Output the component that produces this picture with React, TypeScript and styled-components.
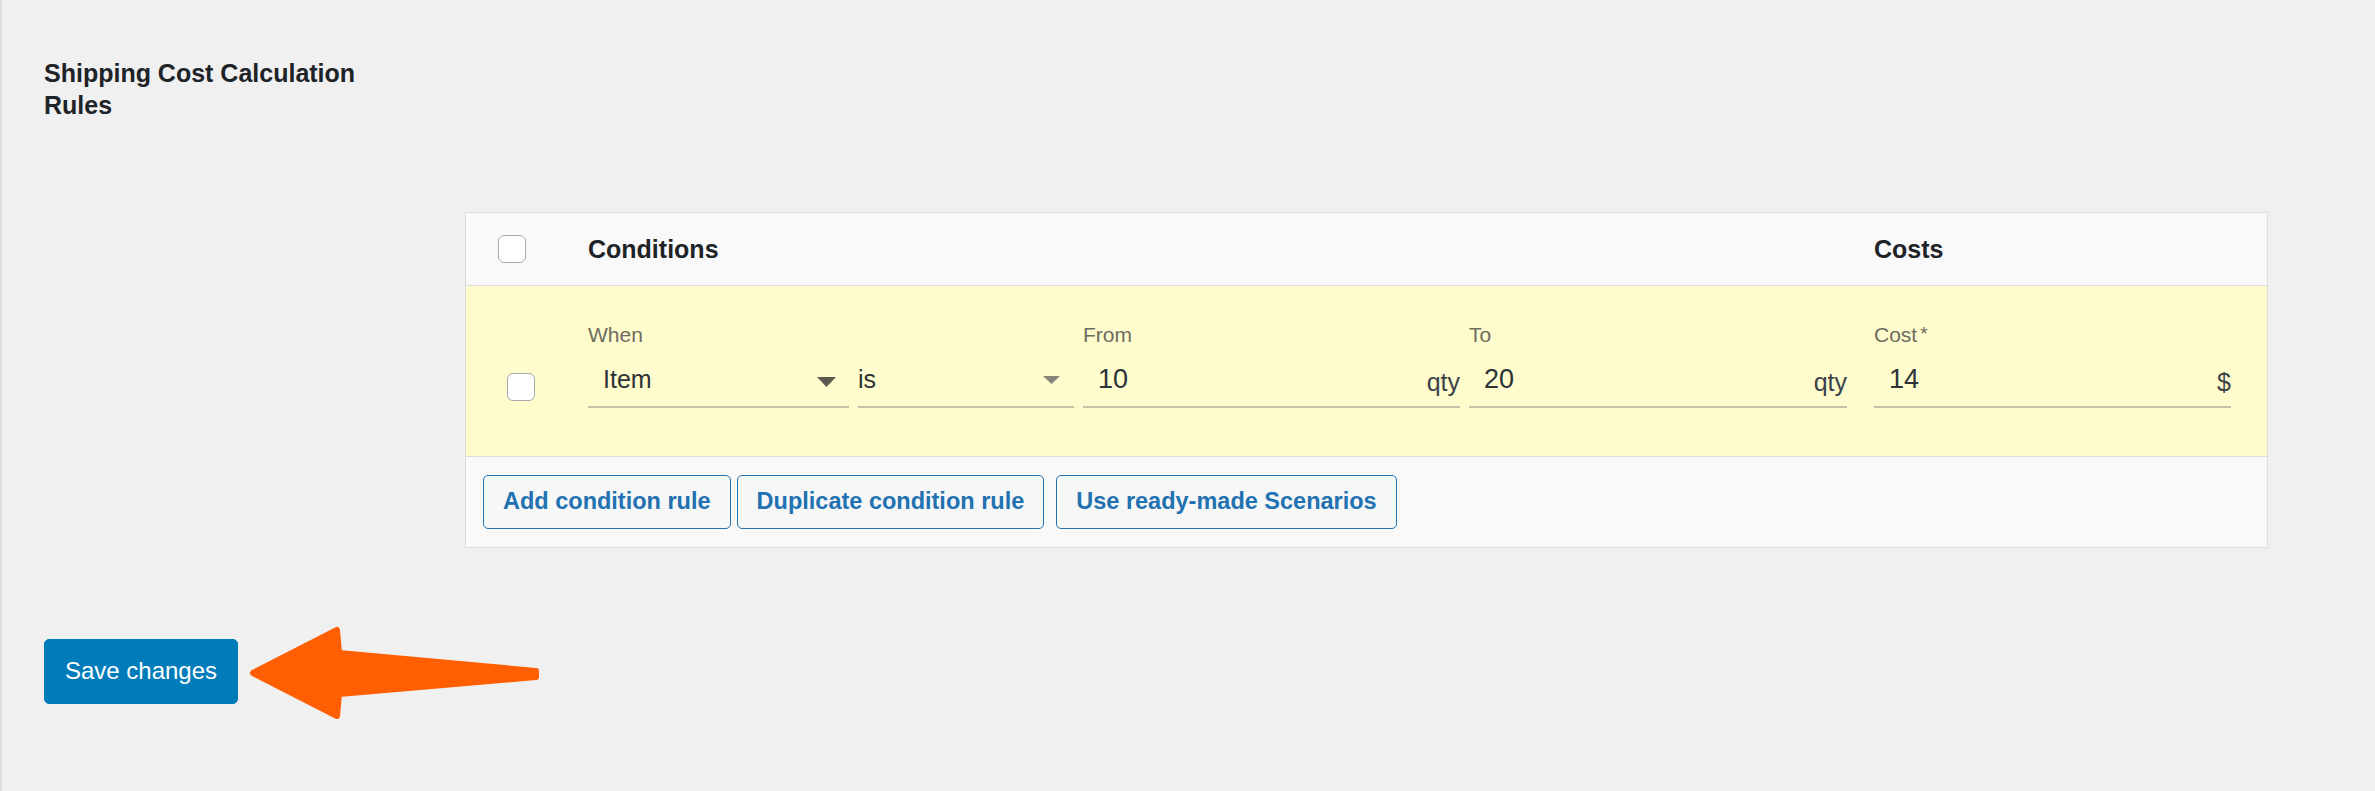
import React from "react";
import styled, { createGlobalStyle } from "styled-components";

const GlobalStyle = createGlobalStyle`
  html, body { margin: 0; padding: 0; background: #f0f0f1; }
  body { font-family: "Liberation Sans", Arial, sans-serif; color: #1d2327; }
  * { box-sizing: border-box; }
`;

const Page = styled.div`
  min-height: 791px;
  border-left: 2px solid #dcdcde;
  padding: 58px 0 0 42px;
`;

const SectionTitle = styled.h2`
  margin: 0;
  width: 330px;
  font-size: 25px;
  line-height: 31.5px;
  font-weight: 700;
  color: #1d2327;
`;

const RulesTable = styled.div`
  margin: 91px 0 0 421px;
  width: 1803px;
  border: 1px solid #dcdcde;
  background: #f9f9f9;
`;

const GridRow = styled.div<{ $bg: string; $height: number }>`
  display: grid;
  grid-template-columns: 122px 1286px 357px;
  height: ${(p) => p.$height}px;
  background: ${(p) => p.$bg};
  border-bottom: 1px solid #dcdcde;
`;

const HeaderRow = styled(GridRow)`
  align-items: center;
`;

const BodyRow = styled(GridRow)`
  align-items: start;
  padding-top: 38px;
`;

const CheckCell = styled.div<{ $pl: number; $pt?: number }>`
  padding-left: ${(p) => p.$pl}px;
  padding-top: ${(p) => p.$pt ?? 0}px;
  display: flex;
`;

const Checkbox = styled.span`
  display: block;
  width: 28px;
  height: 28px;
  border: 1.5px solid #a7aaad;
  border-radius: 6px;
  background: #fff;
`;

const HeadText = styled.div`
  font-size: 25px;
  font-weight: 700;
  color: #1d2327;
  line-height: 30px;
`;

const Conditions = styled.div`
  display: flex;
  gap: 9px;
  width: 1259px;
`;

const Field = styled.div<{ $w: number }>`
  width: ${(p) => p.$w}px;
  display: flex;
  flex-direction: column;
`;

const Label = styled.div`
  font-size: 21px;
  line-height: 21px;
  min-height: 21px;
  color: #6d6c5f;
  margin-bottom: 15px;
  display: flex;
  align-items: flex-start;
`;

const Star = styled.span`
  margin-left: 3px;
  font-size: 19px;
  line-height: 19px;
`;

const Control = styled.div<{ $pl: number }>`
  display: flex;
  align-items: flex-start;
  height: 48px;
  padding: 4px 0 12px ${(p) => p.$pl}px;
  border-bottom: 2px solid #c4c2a9;
`;

const SelectValue = styled.span`
  font-size: 25px;
  line-height: 30px;
  color: #2c3338;
`;

const NumberValue = styled.span`
  font-size: 27px;
  line-height: 30px;
  color: #2c3338;
`;

const Suffix = styled.span`
  margin-left: auto;
  margin-top: 3px;
  font-size: 25px;
  line-height: 30px;
  color: #3c434a;
`;

const Caret = styled.svg<{ $mr: number; $mt: number }>`
  margin-left: auto;
  margin-right: ${(p) => p.$mr}px;
  margin-top: ${(p) => p.$mt}px;
  display: block;
`;

const Footer = styled.div`
  display: flex;
  align-items: center;
  height: 90px;
  padding: 0 17px;
  background: #f9f9f9;
`;

const ActionButton = styled.button<{ $ml?: number }>`
  height: 54px;
  padding: 0 19px;
  margin-left: ${(p) => p.$ml ?? 0}px;
  border: 1px solid #2271b1;
  border-radius: 5px;
  background: #f6f7f7;
  color: #2271b1;
  font-family: "Liberation Sans", Arial, sans-serif;
  font-size: 23.5px;
  font-weight: 700;
  line-height: 1;
  cursor: pointer;
`;

const SaveRow = styled.div`
  display: flex;
  align-items: center;
  margin-top: 72px;
`;

const SaveButton = styled.button`
  height: 65px;
  width: 194px;
  padding: 0;
  border: 1px solid #007cba;
  border-radius: 5px;
  background: #007cba;
  color: #fff;
  font-family: "Liberation Sans", Arial, sans-serif;
  font-size: 24px;
  font-weight: 400;
  cursor: pointer;
`;

const ArrowSvg = styled.svg`
  margin-left: 8px;
  display: block;
`;

const SelectField = ({
  w,
  label,
  value,
  pl,
  dark,
}: {
  w: number;
  label: string;
  value: string;
  pl: number;
  dark: boolean;
}) => (
  <Field $w={w}>
    <Label>{label}</Label>
    <Control $pl={pl}>
      <SelectValue>{value}</SelectValue>
      {dark ? (
        <Caret width="19" height="10" viewBox="0 0 19 10" $mr={13} $mt={13}>
          <polygon points="0,0 19,0 9.5,10" fill="#5b5a4c" />
        </Caret>
      ) : (
        <Caret width="17" height="8" viewBox="0 0 17 8" $mr={14} $mt={12}>
          <polygon points="0,0 17,0 8.5,8" fill="#86857a" />
        </Caret>
      )}
    </Control>
  </Field>
);

const NumberField = ({
  w,
  label,
  value,
  suffix,
  star,
}: {
  w: number;
  label: string;
  value: string;
  suffix: string;
  star?: boolean;
}) => (
  <Field $w={w}>
    <Label>
      {label}
      {star && <Star>*</Star>}
    </Label>
    <Control $pl={15}>
      <NumberValue>{value}</NumberValue>
      <Suffix>{suffix}</Suffix>
    </Control>
  </Field>
);

export default function App() {
  return (
    <>
      <GlobalStyle />
      <Page>
        <SectionTitle>Shipping Cost Calculation Rules</SectionTitle>
        <RulesTable>
          <HeaderRow $bg="#f9f9f9" $height={73}>
            <CheckCell $pl={32}>
              <Checkbox />
            </CheckCell>
            <HeadText>Conditions</HeadText>
            <HeadText>Costs</HeadText>
          </HeaderRow>
          <BodyRow $bg="#fefbcc" $height={171}>
            <CheckCell $pl={41} $pt={49}>
              <Checkbox />
            </CheckCell>
            <Conditions>
              <SelectField w={261} label="When" value="Item" pl={15} dark />
              <SelectField w={216} label="" value="is" pl={0} dark={false} />
              <NumberField w={377} label="From" value="10" suffix="qty" />
              <NumberField w={378} label="To" value="20" suffix="qty" />
            </Conditions>
            <NumberField w={357} label="Cost" value="14" suffix="$" star />
          </BodyRow>
          <Footer>
            <ActionButton type="button">Add condition rule</ActionButton>
            <ActionButton type="button" $ml={6}>
              Duplicate condition rule
            </ActionButton>
            <ActionButton type="button" $ml={12}>
              Use ready-made Scenarios
            </ActionButton>
          </Footer>
        </RulesTable>
        <SaveRow>
          <SaveButton type="button">Save changes</SaveButton>
          <ArrowSvg width="300" height="102" viewBox="0 0 300 102">
            <polygon
              points="7,53 91,10 93,33 290,51 290,57 93,74 91,96"
              fill="#ff5f00"
              stroke="#ff5f00"
              strokeWidth="6"
              strokeLinejoin="round"
            />
          </ArrowSvg>
        </SaveRow>
      </Page>
    </>
  );
}
